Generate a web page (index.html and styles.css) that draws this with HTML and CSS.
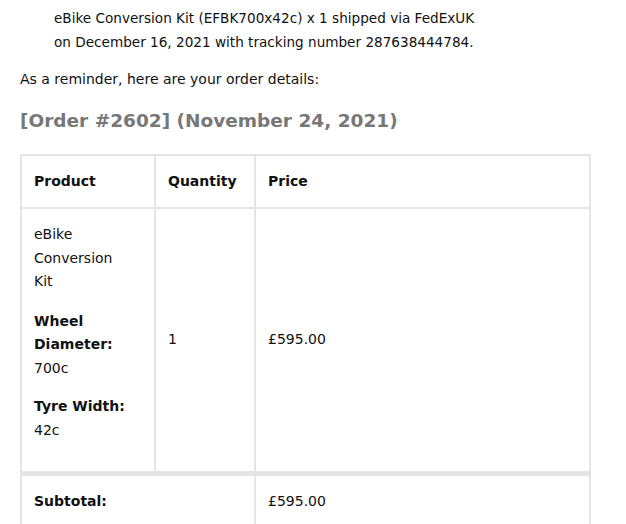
FILE: index.html
```html
<!DOCTYPE html>
<html>
<head>
<meta charset="utf-8">
<link rel="stylesheet" href="styles.css">
</head>
<body>
<div class="email">
  <p class="shipped">eBike Conversion Kit (EFBK700x42c) x 1 shipped via FedExUK<br>on December 16, 2021 with tracking number 287638444784.</p>
  <p class="reminder">As a reminder, here are your order details:</p>
  <h2 class="order-title">[Order #2602] (November 24, 2021)</h2>
  <table class="order-table">
    <thead>
      <tr>
        <th class="col-product">Product</th>
        <th class="col-qty">Quantity</th>
        <th class="col-price">Price</th>
      </tr>
    </thead>
    <tbody>
      <tr>
        <td class="cell-product">
          eBike Conversion Kit
          <ul class="item-meta">
            <li><strong class="meta-label">Wheel Diameter:</strong><p class="meta-value">700c</p></li>
            <li><strong class="meta-label">Tyre Width:</strong><p class="meta-value">42c</p></li>
          </ul>
        </td>
        <td class="cell-mid">1</td>
        <td class="cell-mid"><span class="amount">£595.00</span></td>
      </tr>
    </tbody>
    <tfoot>
      <tr>
        <th colspan="2" class="foot-label">Subtotal:</th>
        <td class="foot-value"><span class="amount">£595.00</span></td>
      </tr>
    </tfoot>
  </table>
</div>
</body>
</html>
```

FILE: styles.css
```css
html, body {
  margin: 0;
  padding: 0;
  background: #fff;
}
body {
  font-family: "DejaVu Sans", "Liberation Sans", sans-serif;
  font-size: 14px;
  line-height: 23.5px;
  color: #111;
}
.email {
  padding: 1px 0 0 20px;
}
.shipped {
  margin: 6px 0 0 34px;
  font-size: 13.6px;
}
.reminder {
  margin: 14px 0 0 0;
}
.order-title {
  margin: 16px 0 0 0;
  font-size: 18.5px;
  line-height: 26px;
  font-weight: bold;
  color: #777;
}
.order-table {
  margin-top: 20px;
  width: 571px;
  table-layout: fixed;
  border: 1px solid #e5e5e5;
  border-collapse: separate;
  border-spacing: 0;
}
.order-table th,
.order-table td {
  border: 1px solid #e5e5e5;
  padding: 14px 12px;
  text-align: left;
  vertical-align: middle;
}
.order-table th {
  font-weight: bold;
}
.col-product { width: 134px; box-sizing: border-box; }
.col-qty { width: 100px; box-sizing: border-box; }
.order-table .cell-product {
  padding-right: 20px;
  padding-bottom: 29px;
}
.item-meta {
  list-style: none;
  margin: 16px 0 0 0;
  padding: 0;
}
.item-meta li + li {
  margin-top: 15px;
}
.meta-label {
  display: block;
  font-weight: bold;
}
.meta-value {
  margin: 0;
}
.order-table tfoot th,
.order-table tfoot td {
  border-top-width: 4px;
}
```
